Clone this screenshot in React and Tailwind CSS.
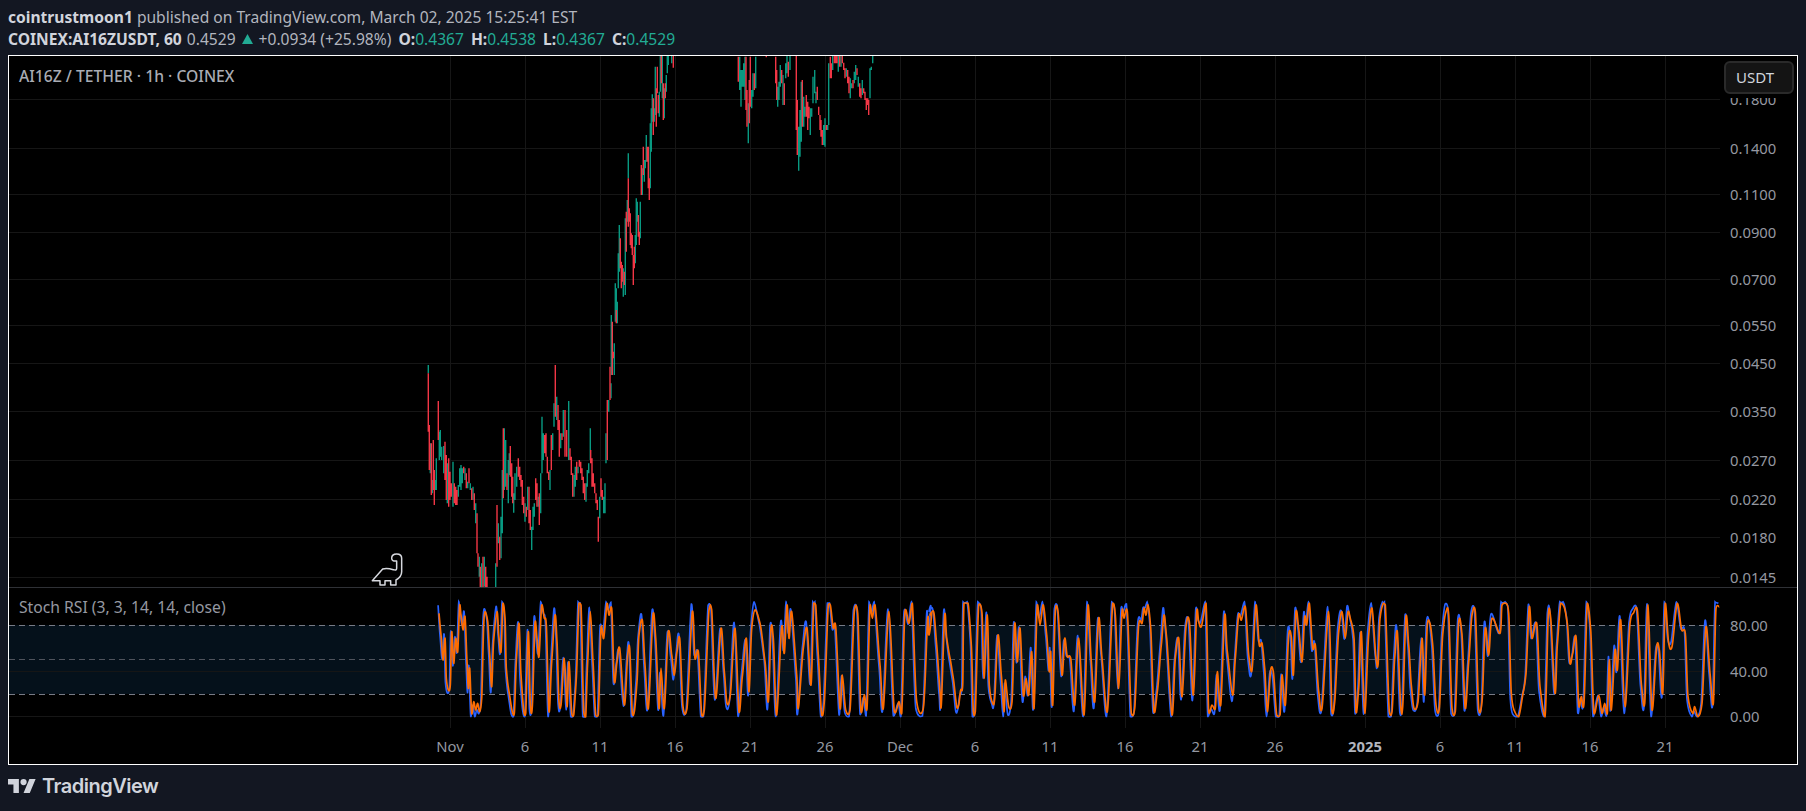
const FONT = '"Noto Sans", "Open Sans", sans-serif'

// traced wicks: x,top,bottom,colour, in 3x crop coordinates
const LOWER = `235,75,100,g 235,100,275,r 238,255,390,r 241,310,400,g 244,310,465,r 247,420,460,g 250,300,450,r 253,390,495,r 256,420,450,g 259,355,450,g 265,183,300,r 268,275,360,g 271,270,350,g 275,320,360,g 281,318,400,g 285,305,420,r 289,345,480,r 292,370,490,g 296,355,500,r 300,395,480,r 304,430,470,r 309,365,500,g 313,430,490,r 317,440,495,r 321,450,495,r 325,435,470,g 329,385,440,g 333,375,450,g 337,385,430,g 341,380,400,r 345,385,420,g 349,400,445,r 353,425,445,g 357,385,430,r 361,430,450,g 365,445,480,r 369,440,480,g 373,460,510,r 377,490,550,g 381,520,640,r 384,640,680,r 388,650,710,g 391,680,743,r 395,670,743,g 399,650,743,r 403,650,740,g 407,680,743,r 411,710,743,r 437,670,743,g 441,495,680,r 445,550,610,g 449,590,660,r 453,530,655,g 457,390,580,g 460,265,475,r 463,265,450,g 467,300,440,g 471,400,450,r 475,360,490,g 478,340,405,g 481,318,410,r 485,370,470,r 488,410,490,r 491,460,518,g 495,400,480,g 500,380,440,g 505,355,410,r 509,380,420,r 513,405,440,r 517,420,495,r 521,470,520,r 525,490,545,g 529,500,530,r 533,440,510,g 537,440,550,r 541,510,570,r 545,560,630,g 549,500,570,g 553,490,530,g 557,415,480,r 561,430,500,r 565,470,500,g 568,460,555,r 572,400,520,g 576,230,400,g 580,280,360,g 584,285,340,r 588,280,350,r 592,350,400,r 596,395,420,r 600,390,450,g 604,285,390,r 608,280,330,g 612,190,260,g 616,75,230,r 620,170,240,g 624,195,270,r 628,240,350,r 632,280,325,g 636,280,300,r 640,210,290,g 645,210,350,r 650,270,350,r 656,183,360,g 660,325,360,r 664,350,405,r 668,400,470,r 672,405,470,g 676,380,440,g 680,365,420,r 684,380,400,g 688,360,380,r 692,365,400,r 696,385,420,r 700,410,460,r 704,430,480,r 708,430,485,g 712,390,440,g 716,370,400,g 721,265,360,g 722,330,370,r 726,355,440,r 730,400,440,r 734,430,460,r 738,460,490,r 742,480,510,r 745,530,605,r 749,470,535,g 753,415,470,r 757,450,480,r 761,470,520,g 765,430,520,g 768,280,370,g 772,180,360,r 776,180,215,g 780,80,180,r 783,130,175,g`

const RISE = `90,935,960,r 94,780,960,g 97,800,960,r 100,890,910,r 103,865,960,g 106,685,800,g 109,700,765,g 109,765,805,r 112,740,805,g 115,595,700,g 118,510,650,g 121,550,640,r 124,620,700,r 127,630,680,r 130,640,725,g 133,650,690,r 136,490,720,g 139,470,590,r 142,435,500,g 145,295,370,g 145,370,515,r 148,460,500,r 151,475,570,r 154,535,580,r 157,540,600,r 160,600,690,r 163,575,640,r 166,540,625,g 169,430,570,g 172,440,500,g 175,480,545,r 178,530,570,r 181,440,550,g 184,330,420,r 187,340,420,g 190,275,360,r 193,315,380,g 196,315,340,g 199,240,320,g 202,275,320,r 205,275,400,r 208,370,435,r 211,205,400,g 214,160,290,g 217,118,200,g 220,130,240,r 223,160,200,g 226,35,180,g 229,100,215,r 232,35,115,r 235,120,175,r 238,110,185,g 241,0,110,g 244,0,85,r 247,0,130,g 250,85,195,r 253,100,190,g 256,85,130,r 259,60,110,g 262,0,55,g 265,0,30,g 275,0,25,g 280,0,38,r`

const TOP = `415,20,95,r 419,20,120,g 423,60,170,g 427,60,110,g 431,40,110,g 435,20,150,g 438,20,180,r 441,120,230,r 445,160,280,g 448,90,220,r 451,20,170,r 455,120,175,g 459,70,140,g 463,70,120,r 467,20,115,g 499,18,22,r 527,20,100,r 530,60,150,r 533,110,170,g 537,95,150,g 541,45,110,g 545,60,100,r 549,75,165,g 553,100,165,r 557,40,85,g 561,18,70,g 565,35,80,r 570,18,60,g 589,18,240,r 592,150,315,r 596,230,362,g 600,180,320,g 604,95,275,g 607,90,230,r 611,140,230,g 615,170,200,g 619,135,200,r 623,155,240,r 627,170,205,r 631,175,255,g 635,175,200,g 639,80,160,g 644,60,130,g 648,125,160,g 652,110,150,r 656,170,195,r 660,195,240,r 663,210,260,r 667,240,285,r 671,225,285,g 675,205,290,g 679,225,240,r 683,225,240,g 686,40,225,g 691,20,85,r 694,40,85,r 698,18,60,g 703,18,40,r 707,18,40,r 711,18,40,r 715,18,65,g 719,18,50,r 723,18,50,g 727,18,40,r 731,38,60,r 735,55,85,r 739,55,80,g 743,60,100,r 747,80,130,r 751,85,145,g 755,100,115,g 759,90,115,r 763,65,100,g 767,45,90,g 771,55,75,r 775,80,110,g 779,100,140,r 783,115,145,r 787,90,135,g 791,115,130,r 795,125,150,r 799,145,180,r 803,145,165,r 806,150,195,r 810,55,145,g 814,50,60,g 818,18,40,g`

// orange %D line, same crop coordinates
const OSC_A = `12,55 18,120 24,195 30,130 34,250 40,285 46,270 50,110 56,205 62,130 68,170 74,30 78,60 84,105 90,65 96,200 100,280 104,220 110,355 116,320 122,345 128,325 134,350 140,310 146,90 150,50 158,80 164,180 170,275 176,135 186,50 192,130 198,170 204,25 210,70 214,220 222,290 232,350 238,355 244,200 252,85 258,240 266,345 272,355 280,110 286,330 292,335 300,85 306,130 312,185 320,30 328,70 334,90 342,350 350,200 360,60 366,140 372,320 378,330 388,190 396,335 402,200 410,355 416,360 424,250 432,25 438,30 446,350 452,365 458,200 466,50 474,200 482,360 490,360 498,100 506,130 516,25 522,60 530,40 538,260 546,200 554,160 568,330 578,180 584,160 592,355 598,350 606,260 612,120 622,75 630,210 640,340 654,60 662,130 672,340 678,220 688,340 700,110 710,180 718,240 726,170 734,130 744,335 756,340 772,50 780,190 790,170 800,360 808,345 822,45 830,45 842,310 858,100 868,230 876,325 886,300 900,100 912,350 922,245 934,130 942,290 950,100 960,45 975,85 990,200 1000,320 1008,100 1015,130 1025,360 1040,95 1048,175 1056,30 1062,130 1070,50 1085,240 1090,340 1105,160 1116,100 1128,270 1136,25 1142,30 1150,180 1160,360 1168,320 1180,30 1186,30 1195,100 1202,95 1215,340 1222,240 1232,345 1245,345 1258,50 1268,55 1278,350 1288,300 1296,340 1305,30 1312,70 1320,30 1335,210 1345,340 1362,50 1378,350 1392,320 1400,355 1410,50 1422,85 1432,25 1445,320 1465,340 1478,70 1482,120 1490,55`

const OSC_B = `0,60 6,50 12,55 20,150 30,290 34,330 44,60 50,130 60,190 70,250 80,335 86,330 92,285 98,270 102,25 114,25 124,150 130,350 136,350 146,30 156,55 162,250 172,60 178,270 188,325 194,310 204,120 214,240 222,350 226,255 236,335 246,320 254,85 262,200 270,100 280,300 288,250 296,300 305,170 312,340 322,30 330,90 340,30 350,120 358,230 362,170 368,330 376,50 384,50 396,240 404,130 412,185 422,190 434,330 446,130 462,360 474,30 484,200 494,320 506,70 516,190 532,350 548,25 556,60 566,280 576,50 582,70 592,50 604,355 614,340 626,90 636,85 642,40 648,60 654,30 662,100 672,350 682,290 694,150 702,60 710,130 726,360 736,190 746,130 756,305 768,95 778,80 790,300 800,50 806,80 814,95 828,25 836,350 846,330 856,340 862,230 872,330 884,60 892,170 908,300 916,190 926,60 934,75 946,35 956,180 966,225 978,30 988,150 996,145 1004,220 1012,350 1022,225 1030,230 1040,360 1050,360 1056,240 1066,330 1076,120 1084,125 1090,240 1098,50 1106,100 1116,200 1124,65 1130,90 1138,25 1148,160 1156,150 1166,290 1176,340 1196,50 1206,350 1214,320 1226,110 1236,50 1246,130 1254,50 1262,75 1272,130 1278,350 1286,280 1294,110 1304,355 1316,120 1326,40 1338,190 1344,210 1350,70 1360,25 1366,30 1378,350 1386,350 1394,190 1402,110 1412,335 1418,335 1428,65 1436,150 1444,270 1452,340 1464,320 1476,130 1484,300 1492,90`

const OSC_C = `1500,85 1508,150 1518,330 1528,340 1538,120 1548,50 1556,60 1566,340 1576,350 1586,80 1596,120 1606,340 1616,200 1626,60 1636,50 1646,340 1656,320 1666,100 1676,180 1686,70`

// this stretch comes from the crop starting at y 570
const OSC_D = `0,190 6,105 18,100 26,130 34,370 42,420 56,440 70,365 78,310 88,110 96,205 110,160 120,350 135,440 145,135 152,145 165,370 172,225 182,100 192,110 202,160 210,280 218,250 228,200 236,405 244,380 252,400 262,100 272,180 282,430 296,375 306,430 314,400 322,430 328,270 334,420 345,240 352,300 362,150 375,410 390,160 400,130 412,120 424,340 434,400 444,105 456,420 470,230 478,240 488,370 496,100 506,220 516,230 532,100 545,180 556,190 564,380 578,430 584,410 594,440 606,400 618,170 630,310 640,400 648,115 658,110`

const parseBars = (str, x0, y0) =>
  str.split(' ').map(s => {
    const [x, t, b, c] = s.split(',')
    return { x: x0 + x / 3, t: y0 + t / 3, b: y0 + b / 3, c }
  })

const parseLine = (str, x0, y0) =>
  str.split(' ').map(s => {
    const [x, y] = s.split(',')
    return [x0 + x / 3, y0 + y / 3]
  })

const ALL_BARS = [
  ...parseBars(LOWER, 350, 340),
  ...parseBars(RISE, 580, 55),
  ...parseBars(TOP, 600, 50),
]

const barPath = c =>
  ALL_BARS.filter(b => b.c === c).map(b => `M${b.x.toFixed(1)} ${b.t.toFixed(1)}V${b.b.toFixed(1)}`).join('')

const ORANGE = [
  ...parseLine(OSC_A, 435, 595),
  ...parseLine(OSC_B, 930, 595),
  ...parseLine(OSC_C, 930, 595),
  ...parseLine(OSC_D, 1500, 570),
]

// fast %K: leads the %D a little and overshoots it
let seed = 7
const rand = () => {
  seed = (seed * 16807) % 2147483647
  return seed / 2147483647
}
const BLUE = ORANGE.map(([x, y]) => {
  const v = y + (y - 659) * 0.09 + (rand() - 0.5) * 8
  return [x - 0.9, Math.min(716.5, Math.max(602, v))]
})

const clampY = y => Math.max(603, Math.min(717, y))

// catmull-rom so the peaks round off like the original
const smooth = pts => {
  let d = `M${pts[0][0].toFixed(1)} ${pts[0][1].toFixed(1)}`
  for (let i = 0; i < pts.length - 1; i++) {
    const p0 = pts[Math.max(i - 1, 0)]
    const p1 = pts[i]
    const p2 = pts[i + 1]
    const p3 = pts[Math.min(i + 2, pts.length - 1)]
    const c1x = p1[0] + (p2[0] - p0[0]) / 6
    const c1y = clampY(p1[1] + (p2[1] - p0[1]) / 8)
    const c2x = p2[0] - (p3[0] - p1[0]) / 6
    const c2y = clampY(p2[1] - (p3[1] - p1[1]) / 8)
    d += `C${c1x.toFixed(1)} ${c1y.toFixed(1)} ${c2x.toFixed(1)} ${c2y.toFixed(1)} ${p2[0].toFixed(1)} ${p2[1].toFixed(1)}`
  }
  return d
}

const PRICES = [
  ['0.1800', 99], ['0.1400', 148], ['0.1100', 194], ['0.0900', 232], ['0.0700', 279], ['0.0550', 325],
  ['0.0450', 363], ['0.0350', 411], ['0.0270', 460], ['0.0220', 499], ['0.0180', 537], ['0.0145', 577],
]

const TICKS = [
  ['Nov', 450], ['6', 525], ['11', 600], ['16', 675], ['21', 750], ['26', 825], ['Dec', 900], ['6', 975],
  ['11', 1050], ['16', 1125], ['21', 1200], ['26', 1275], ['2025', 1365, true], ['6', 1440], ['11', 1515],
  ['16', 1590], ['21', 1665],
]

const RSI_LABELS = [['80.00', 625], ['40.00', 671], ['0.00', 716]]

function VGrid({ y1, y2 }) {
  return TICKS.map(([, x]) => (
    <line key={x} x1={x + 0.5} x2={x + 0.5} y1={y1} y2={y2} stroke="#161616" />
  ))
}

function PriceChart() {
  return (
    <svg className="block w-full h-full" viewBox="9 56 1711 531">
      <VGrid y1={56} y2={587} />
      {PRICES.map(([p, y]) => (
        <line key={p} x1={9} x2={1720} y1={y + 0.5} y2={y + 0.5} stroke="#161616" />
      ))}
      <path d={barPath('g')} stroke="#089981" strokeWidth="1.4" fill="none" />
      <path d={barPath('r')} stroke="#f23645" strokeWidth="1.4" fill="none" />
      {/* dino marker */}
      <path
        transform="translate(340 545) scale(0.3333)"
        d="M97 107 H120 V120 H135 V107 H152 V120 H168 V105 Q185 95 185 80 V40 Q185 27 170 27 Q155 27 155 40 Q155 50 170 48 V70 Q170 78 160 74 Q140 68 128 72 Z"
        fill="none"
        stroke="#d6d8de"
        strokeWidth="4.5"
        strokeLinejoin="round"
      />
    </svg>
  )
}

function RsiChart() {
  return (
    <svg className="block w-full h-full" viewBox="9 588 1711 142">
      <rect x={9} y={625} width={1711} height={69} fill="#05111b" />
      <VGrid y1={588} y2={728} />
      {[671, 716].map(y => (
        <line key={y} x1={9} x2={1720} y1={y + 0.5} y2={y + 0.5} stroke="#161616" />
      ))}
      <line x1={9} x2={1720} y1={625.5} y2={625.5} stroke="#787b86" strokeDasharray="6 4" />
      <line x1={9} x2={1720} y1={659.5} y2={659.5} stroke="#50535c" strokeDasharray="6 4" />
      <line x1={9} x2={1720} y1={694.5} y2={694.5} stroke="#787b86" strokeDasharray="6 4" />
      <path d={smooth(BLUE)} fill="none" stroke="#2962ff" strokeWidth="1.7" />
      <path d={smooth(ORANGE)} fill="none" stroke="#ff6d00" strokeWidth="1.7" />
    </svg>
  )
}

function TvLogo() {
  return (
    <div className="flex items-center gap-[6px] text-[#d1d4dc]">
      <svg width="28" height="14" viewBox="0 4 36 18" fill="currentColor">
        <path d="M14 22H7V11H0V4h14v18zM28 22h-8l7.5-18h8L28 22z" />
        <circle cx="20" cy="8" r="4" />
      </svg>
      <span className="text-[20px] font-semibold leading-none tracking-[-0.5px]" style={{ fontFamily: 'Inter, sans-serif' }}>
        TradingView
      </span>
    </div>
  )
}

export default function App() {
  return (
    <div className="h-[811px] w-full flex flex-col bg-[#131722] overflow-hidden" style={{ fontFamily: FONT }}>
      {/* Header */}
      <div className="h-[55px] px-2 pt-[6px] text-[15.6px] leading-[22px] text-[#b2b5be] whitespace-nowrap">
        <div>
          <b className="font-bold text-[#d1d4dc]">cointrustmoon1</b> published on TradingView.com, March 02, 2025 15:25:41 EST
        </div>
        <div className="flex items-center">
          <b className="font-bold text-[#d1d4dc]">COINEX:AI16ZUSDT, 60</b>
          <span className="ml-[5px]">0.4529</span>
          <svg className="mx-[6px]" width="11" height="10" viewBox="0 0 11 10">
            <polygon points="5.5,0 11,10 0,10" fill="#22ab94" />
          </svg>
          <span>+0.0934 (+25.98%)</span>
          <b className="ml-[7px] font-bold text-[#d1d4dc]">O:</b>
          <span className="text-[#22ab94]">0.4367</span>
          <b className="ml-[7px] font-bold text-[#d1d4dc]">H:</b>
          <span className="text-[#22ab94]">0.4538</span>
          <b className="ml-[7px] font-bold text-[#d1d4dc]">L:</b>
          <span className="text-[#22ab94]">0.4367</span>
          <b className="ml-[7px] font-bold text-[#d1d4dc]">C:</b>
          <span className="text-[#22ab94]">0.4529</span>
        </div>
      </div>

      {/* Chart frame */}
      <div className="mx-2 h-[710px] border border-white bg-black flex flex-col text-[#9598a1] text-[14.8px]">
        {/* Price pane */}
        <div className="relative h-[532px] flex border-b border-[#2f3136] overflow-hidden">
          <div className="w-[1711px] h-[531px]">
            <PriceChart />
          </div>
          <div className="relative flex-1">
            {PRICES.map(([p, y]) => (
              <span key={p} className="absolute left-[10px] leading-none -translate-y-1/2" style={{ top: y - 56 }}>
                {p}
              </span>
            ))}
          </div>
          <div className="absolute left-[10px] top-[9px] text-[15.7px] font-medium text-[#a9acb4]">AI16Z / TETHER · 1h · COINEX</div>
          <div className="absolute right-[3px] top-[5px] w-[70px] h-[33px] pl-[10px] flex items-center rounded-md border-2 border-[#2a2a2a] bg-[#141414] text-[15px] text-[#d1d4dc] shadow-[0_4px_0_0_#000]">
            USDT
          </div>
        </div>

        {/* Stoch RSI pane */}
        <div className="relative h-[142px] flex">
          <div className="w-[1711px] h-[142px]">
            <RsiChart />
          </div>
          <div className="relative flex-1">
            {RSI_LABELS.map(([p, y]) => (
              <span key={p} className="absolute left-[10px] leading-none -translate-y-1/2" style={{ top: y - 588 }}>
                {p}
              </span>
            ))}
          </div>
          <div className="absolute left-[10px] top-[8px] text-[15.7px]">Stoch RSI (3, 3, 14, 14, close)</div>
        </div>

        {/* Time axis */}
        <div className="relative flex-1">
          {TICKS.map(([label, x, bold]) => (
            <span
              key={x}
              className={`absolute top-[9px] leading-none -translate-x-1/2 ${bold ? 'font-bold text-[#b2b5be]' : ''}`}
              style={{ left: x - 9 }}
            >
              {label}
            </span>
          ))}
        </div>
      </div>

      {/* Footer */}
      <div className="flex-1 flex items-center px-2 pb-[4px]">
        <TvLogo />
      </div>
    </div>
  )
}
